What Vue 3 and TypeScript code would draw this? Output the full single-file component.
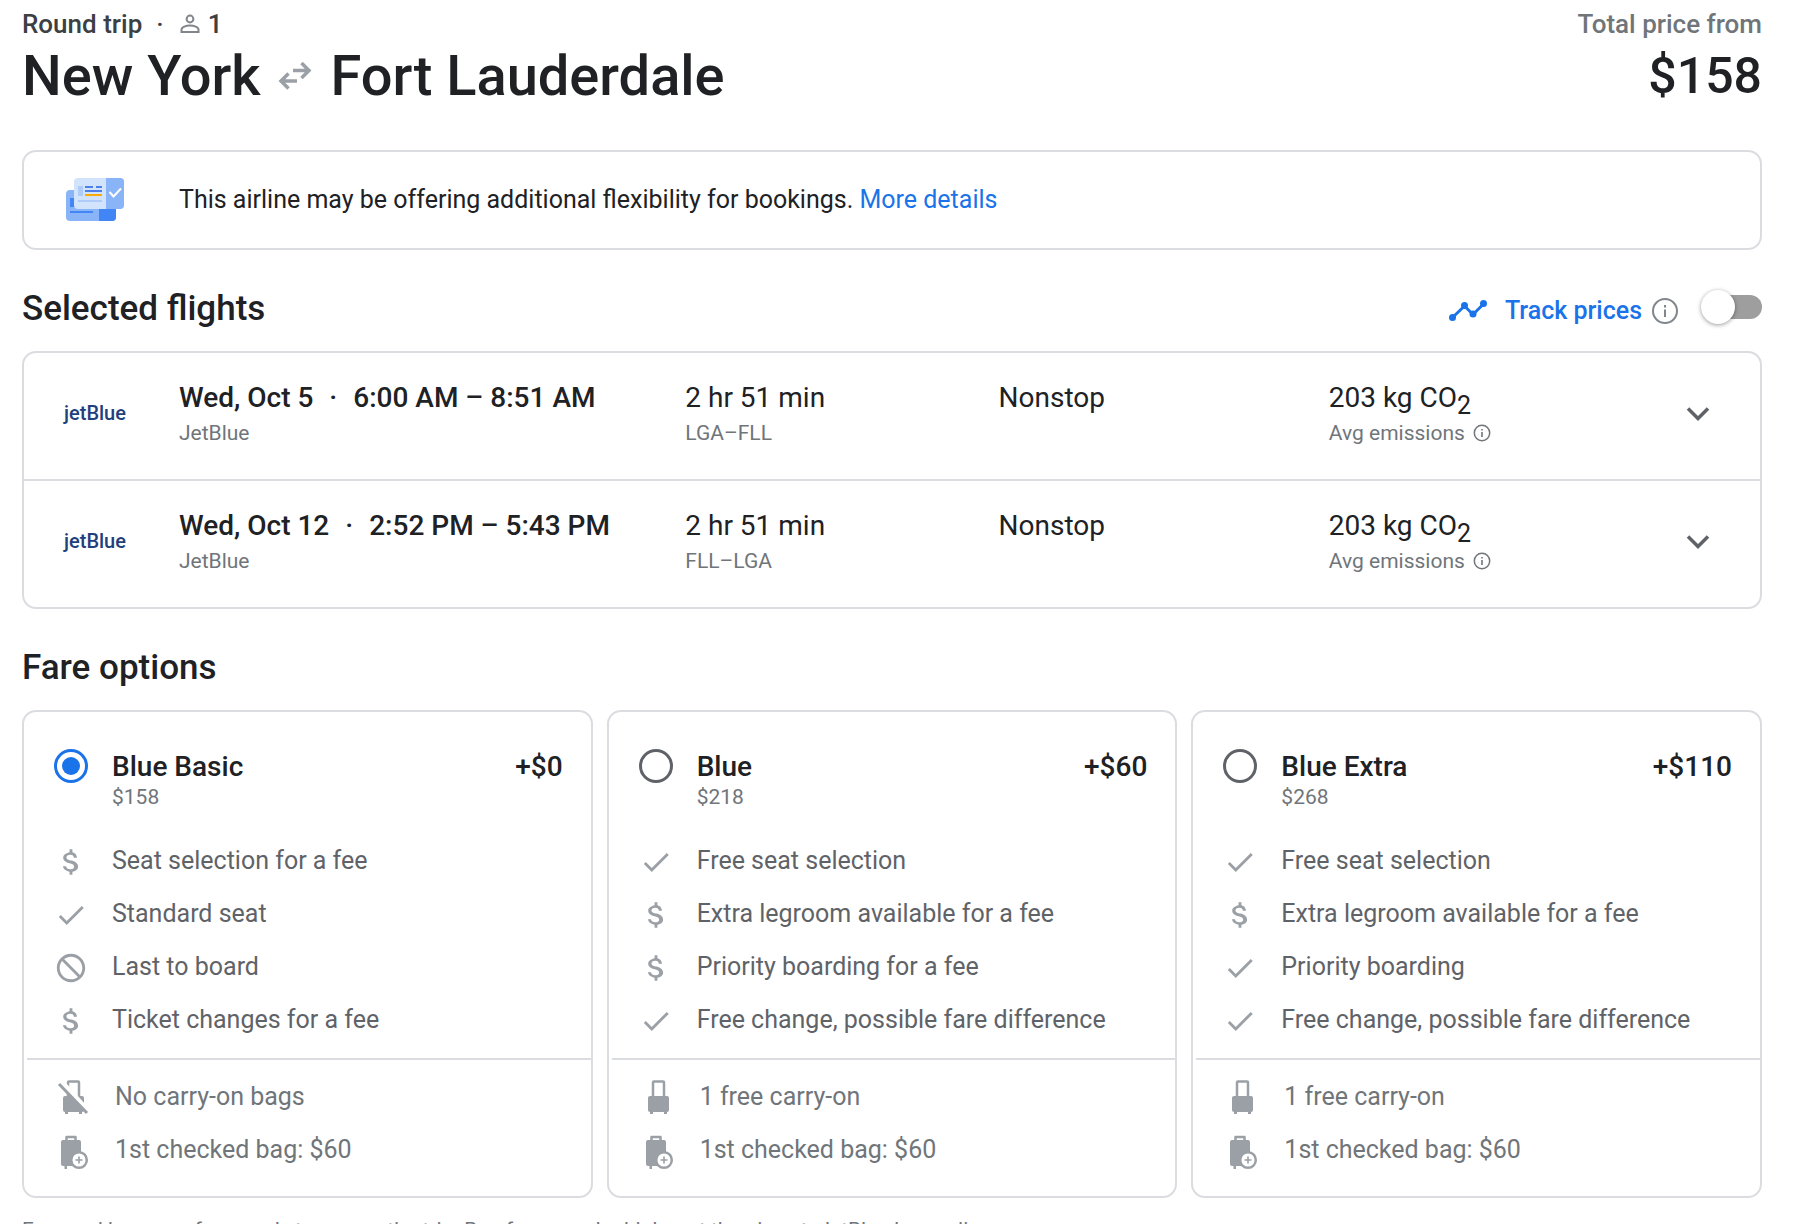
<script setup lang="ts">
import { ref } from 'vue'

type Mark = 'fee' | 'yes' | 'no'
type Bag = 'noCarry' | 'carry' | 'checked'

interface Flight {
  date: string
  times: string
  duration: string
  route: string
}

interface Fare {
  id: string
  name: string
  total: string
  extra: string
  perks: { mark: Mark; text: string }[]
  bags: { kind: Bag; text: string }[]
}

const flights: Flight[] = [
  { date: 'Wed, Oct 5', times: '6:00 AM – 8:51 AM', duration: '2 hr 51 min', route: 'LGA–FLL' },
  { date: 'Wed, Oct 12', times: '2:52 PM – 5:43 PM', duration: '2 hr 51 min', route: 'FLL–LGA' },
]

const fares: Fare[] = [
  {
    id: 'basic',
    name: 'Blue Basic',
    total: '$158',
    extra: '+$0',
    perks: [
      { mark: 'fee', text: 'Seat selection for a fee' },
      { mark: 'yes', text: 'Standard seat' },
      { mark: 'no', text: 'Last to board' },
      { mark: 'fee', text: 'Ticket changes for a fee' },
    ],
    bags: [
      { kind: 'noCarry', text: 'No carry-on bags' },
      { kind: 'checked', text: '1st checked bag: $60' },
    ],
  },
  {
    id: 'blue',
    name: 'Blue',
    total: '$218',
    extra: '+$60',
    perks: [
      { mark: 'yes', text: 'Free seat selection' },
      { mark: 'fee', text: 'Extra legroom available for a fee' },
      { mark: 'fee', text: 'Priority boarding for a fee' },
      { mark: 'yes', text: 'Free change, possible fare difference' },
    ],
    bags: [
      { kind: 'carry', text: '1 free carry-on' },
      { kind: 'checked', text: '1st checked bag: $60' },
    ],
  },
  {
    id: 'extra',
    name: 'Blue Extra',
    total: '$268',
    extra: '+$110',
    perks: [
      { mark: 'yes', text: 'Free seat selection' },
      { mark: 'fee', text: 'Extra legroom available for a fee' },
      { mark: 'yes', text: 'Priority boarding' },
      { mark: 'yes', text: 'Free change, possible fare difference' },
    ],
    bags: [
      { kind: 'carry', text: '1 free carry-on' },
      { kind: 'checked', text: '1st checked bag: $60' },
    ],
  },
]

const markPaths: Record<Mark, string> = {
  fee: 'M11.8 10.9c-2.27-.59-3-1.2-3-2.15 0-1.09 1.01-1.85 2.7-1.85 1.78 0 2.44.85 2.5 2.1h2.21c-.07-1.72-1.12-3.3-3.21-3.81V3h-2v2.16c-1.94.42-4.5 1.68-4.5 3.61 0 2.31 1.91 3.46 4.7 4.13 2.5.6 3 1.48 3 2.41 0 .69-.49 1.79-2.7 1.79-2.06 0-2.87-.92-2.98-2.1h-2.2c.12 2.19 2.76 3.42 4.68 3.83V21h2v-2.15c1.95-.37 4-1.5 4-3.55 0-2.84-2.43-3.81-4.7-4.4z',
  yes: 'M9 16.17 4.83 12l-1.42 1.41L9 19 21 7l-1.41-1.41z',
  no: 'M12 2C17.52 2 22 6.48 22 12s-4.48 10-10 10S2 17.52 2 12 6.48 2 12 2zM20 12c0-4.42-3.58-8-8-8-1.85 0-3.55.63-4.9 1.69L18.31 16.9C19.37 15.55 20 13.85 20 12zm-8 8c1.85 0 3.55-.63 4.9-1.69L5.69 7.1C4.63 8.45 4 10.15 4 12c0 4.42 3.58 8 8 8z',
}

const selectedFare = ref('basic')
const tracking = ref(false)
const openFlight = ref<number | null>(null)
</script>

<template>
  <main class="page">
    <header class="summary">
      <div>
        <p class="trip">
          <span>Round trip</span>
          <span class="dot">·</span>
          <svg class="person" viewBox="0 0 20 20" aria-label="Passengers">
            <circle cx="10" cy="5" r="3.4" fill="none" stroke="currentColor" stroke-width="2" />
            <path d="M1.5 18v-2.6c0-2.4 4.6-3.9 8.5-3.9s8.5 1.5 8.5 3.9V18z" fill="none" stroke="currentColor" stroke-width="2" />
          </svg>
          <span class="count">1</span>
        </p>
        <h1 class="cities">
          <span>New York</span>
          <svg class="swap" viewBox="0 0 34 28" aria-label="to and from">
            <path d="M15 8.5h16M23.5 1l7.5 7.5-7.5 7.5M19 19H3M10.5 11.5 3 19l7.5 7.5" fill="none" stroke="currentColor" stroke-width="3.5" />
          </svg>
          <span>Fort Lauderdale</span>
        </h1>
      </div>
      <div class="total">
        <p class="total-label">Total price from</p>
        <p class="total-price">$158</p>
      </div>
    </header>

    <section class="notice">
      <svg class="notice-icon" viewBox="0 0 58 44" aria-hidden="true">
        <rect y="12" width="50" height="31" rx="4" fill="#8ab4f8" />
        <path d="M33 12h13a4 4 0 0 1 4 4v23a4 4 0 0 1-4 4H33z" fill="#4285f4" />
        <path d="M4 20h5v9H4zM4 33h23v2H4z" fill="#4285f4" />
        <rect x="8" width="50" height="31" rx="4" fill="#d2e3fc" />
        <path d="M40 0h14a4 4 0 0 1 4 4v23a4 4 0 0 1-4 4H40z" fill="#8ab4f8" />
        <path d="M12 8h5v10h-5zM12 22h24v2H12z" fill="#aecbfa" />
        <path d="M19 8h8v2h-8zM30 8h6v2h-6zM19 12h17v2H19z" fill="#4c7fe8" />
        <path d="M19 16h17v2H19z" fill="#f9ab00" />
        <path d="m43.5 14 4 4.5 7.5-8" fill="none" stroke="#fff" stroke-width="2" />
      </svg>
      <p>
        This airline may be offering additional flexibility for bookings.
        <a href="#details">More details</a>
      </p>
    </section>

    <div class="section-head">
      <h2>Selected flights</h2>
      <div class="track">
        <svg class="trend" viewBox="0 0 38 22" aria-hidden="true">
          <path d="M3.5 17.5 15.5 6l8.5 8.5L34.5 4" fill="none" stroke="currentColor" stroke-width="3" />
          <g fill="currentColor">
            <circle cx="3.5" cy="17.5" r="3.5" />
            <circle cx="15.5" cy="5.5" r="3.5" />
            <circle cx="24" cy="14" r="3.5" />
            <circle cx="34.5" cy="3.5" r="3.5" />
          </g>
        </svg>
        <label for="track-prices">Track prices</label>
        <svg class="info-large" viewBox="0 0 26 26" aria-label="About price tracking">
          <circle cx="13" cy="13" r="12" fill="none" stroke="currentColor" stroke-width="2" />
          <path d="M12 11.5h2V19h-2zM12 7h2v2.5h-2z" fill="currentColor" />
        </svg>
        <input id="track-prices" v-model="tracking" class="switch" type="checkbox" role="switch" />
      </div>
    </div>

    <ul class="flights">
      <li v-for="(flight, i) in flights" :key="flight.route" class="flight">
        <span class="airline-logo">jetBlue</span>
        <div>
          <p class="lead strong">{{ flight.date }}<span class="dot">·</span>{{ flight.times }}</p>
          <p class="sub">JetBlue</p>
        </div>
        <div>
          <p class="lead">{{ flight.duration }}</p>
          <p class="sub">{{ flight.route }}</p>
        </div>
        <p class="lead">Nonstop</p>
        <div>
          <p class="lead">203 kg CO<sub>2</sub></p>
          <p class="sub emissions">
            Avg emissions
            <svg class="info-small" viewBox="0 0 18 18" aria-label="About emissions">
              <circle cx="9" cy="9" r="7.7" fill="none" stroke="currentColor" stroke-width="1.5" />
              <path d="M8.2 8h1.6v5H8.2zM8.2 5h1.6v1.6H8.2z" fill="currentColor" />
            </svg>
          </p>
        </div>
        <button
          class="expand"
          type="button"
          aria-label="Flight details"
          :aria-expanded="openFlight === i"
          @click="openFlight = openFlight === i ? null : i"
        >
          <svg viewBox="0 0 24 24" aria-hidden="true">
            <path d="m2 7.5 10 10 10-10" fill="none" stroke="currentColor" stroke-width="3.5" />
          </svg>
        </button>
      </li>
    </ul>

    <div class="section-head">
      <h2>Fare options</h2>
    </div>

    <div class="fares" role="radiogroup" aria-label="Fare options">
      <section v-for="fare in fares" :key="fare.id" class="fare">
        <div class="fare-head">
          <input :id="fare.id" v-model="selectedFare" class="radio" type="radio" name="fare" :value="fare.id" />
          <label :for="fare.id">
            <span class="fare-name">{{ fare.name }}</span>
            <span class="fare-total">{{ fare.total }}</span>
          </label>
          <span class="fare-extra">{{ fare.extra }}</span>
        </div>
        <ul class="perks">
          <li v-for="perk in fare.perks" :key="perk.text">
            <svg class="mark" viewBox="0 0 24 24" aria-hidden="true">
              <path :d="markPaths[perk.mark]" fill="currentColor" />
            </svg>
            {{ perk.text }}
          </li>
        </ul>
        <ul class="bags">
          <li v-for="bag in fare.bags" :key="bag.text">
            <svg v-if="bag.kind === 'checked'" class="bag" viewBox="0 -2 34 38" aria-hidden="true">
              <path d="M9.5 7V3h9v4" fill="none" stroke="currentColor" stroke-width="2.5" stroke-linejoin="round" />
              <path d="M6 6h16a2 2 0 0 1 2 2v24H10v3H7.5v-3H6a2 2 0 0 1-2-2V8a2 2 0 0 1 2-2z" fill="currentColor" />
              <circle cx="22" cy="26" r="7.8" fill="#fff" stroke="currentColor" stroke-width="2.5" />
              <path d="M21.2 22.5h1.6v2.7h2.7v1.6h-2.7v2.7h-1.6v-2.7h-2.7v-1.6h2.7z" fill="currentColor" />
            </svg>
            <svg v-else class="bag" viewBox="1 0 34 38" aria-hidden="true">
              <path d="M12 18V3.5a1 1 0 0 1 1-1h9a1 1 0 0 1 1 1V18" fill="none" stroke="currentColor" stroke-width="2.5" />
              <path d="M9 17h17a2 2 0 0 1 2 2v12a2 2 0 0 1-2 2v2h-3v-2H12v2H9v-2a2 2 0 0 1-2-2V19a2 2 0 0 1 2-2z" fill="currentColor" />
              <template v-if="bag.kind === 'noCarry'">
                <path d="m4 1 28 31" stroke="#fff" stroke-width="5" />
                <path d="m3 5 28 29" stroke="currentColor" stroke-width="3" />
              </template>
            </svg>
            {{ bag.text }}
          </li>
        </ul>
      </section>
    </div>

    <p class="footnote">
      Fare and baggage fees apply to your entire trip. Bag fees may be higher at the airport.
      <a href="#bags">JetBlue bag policy</a>
    </p>
  </main>
</template>

<style>
body {
  margin: 0;
  background: #fff;
}
</style>

<style scoped>
.page {
  padding: 8px 40px 24px 22px;
  font-family: Roboto, "Liberation Sans", sans-serif;
  font-size: 25px;
  line-height: 32px;
  color: #202124;
}

p,
h1,
h2,
ul {
  margin: 0;
  padding: 0;
  list-style: none;
}

a {
  color: #1a73e8;
  text-decoration: none;
}

.dot {
  margin: 0 14px;
}

.summary {
  display: flex;
  justify-content: space-between;
  font-size: 26px;
  font-weight: 500;
}

.trip {
  display: flex;
  align-items: center;
  color: #3c4043;
}

.person {
  width: 20px;
  height: 20px;
  margin: 0 8px 0 2px;
  color: #80868b;
}

.cities {
  display: flex;
  align-items: center;
  gap: 18px;
  font-size: 56px;
  line-height: 72px;
  font-weight: 500;
}

.swap {
  width: 34px;
  height: 28px;
  color: #9aa0a6;
}

.total {
  text-align: right;
}

.total-label {
  color: #70757a;
}

.total-price {
  font-size: 50px;
  line-height: 72px;
}

.notice {
  display: flex;
  align-items: center;
  gap: 55px;
  margin-top: 38px;
  padding: 32px 42px;
  border: 2px solid #dadce0;
  border-radius: 14px;
}

.notice-icon {
  flex: none;
  width: 58px;
  height: 44px;
  margin: -6px 0;
}

.section-head {
  display: flex;
  align-items: center;
  justify-content: space-between;
  height: 40px;
  margin: 39px 0 22px;
}

h2 {
  font-size: 35px;
  line-height: 40px;
  font-weight: 500;
}

.track {
  display: flex;
  align-items: center;
  margin-top: 4px;
  font-weight: 500;
  color: #1a73e8;
}

.trend {
  width: 38px;
  height: 22px;
  margin-right: 18px;
}

.info-large {
  width: 26px;
  height: 26px;
  margin: 0 30px 0 10px;
  color: #80868b;
}

.switch {
  appearance: none;
  display: flex;
  align-items: center;
  width: 54px;
  height: 24px;
  margin: 0 0 8px;
  background: #9e9e9e;
  border-radius: 12px;
}

.switch::before {
  content: "";
  flex: none;
  width: 34px;
  height: 34px;
  margin-left: -7px;
  border-radius: 50%;
  background: #fff;
  box-shadow: 0 1px 4px rgba(0, 0, 0, 0.4);
}

.switch:checked {
  background: #8ab4f8;
}

.switch:checked::before {
  margin-left: 26px;
  background: #1a73e8;
}

.flights {
  border: 2px solid #dadce0;
  border-radius: 14px;
}

.flight {
  display: grid;
  grid-template-columns: 115px 506fr 313fr 330fr 347fr 44px;
  align-items: start;
  padding: 25px 40px 31px;
}

.flight + .flight {
  border-top: 2px solid #dadce0;
}

.airline-logo {
  align-self: center;
  font-size: 20px;
  font-weight: 500;
  color: #1f3f7c;
}

.lead {
  font-size: 28px;
  line-height: 40px;
}

.strong {
  font-weight: 500;
}

.strong .dot {
  margin: 0 16px;
}

.sub {
  font-size: 21px;
  line-height: 30px;
  color: #70757a;
}

sub {
  font-size: 25px;
  line-height: 0;
}

.emissions {
  display: flex;
  align-items: center;
  gap: 8px;
}

.info-small {
  width: 18px;
  height: 18px;
}

.expand {
  align-self: center;
  display: flex;
  justify-content: center;
  padding: 0;
  border: 0;
  background: none;
  color: #5f6368;
}

.expand svg {
  width: 24px;
  height: 24px;
}

.fares {
  display: grid;
  grid-template-columns: repeat(3, 1fr);
  gap: 14px;
}

.fare {
  border: 2px solid #dadce0;
  border-radius: 14px;
}

.fare-head {
  display: flex;
  align-items: flex-start;
  padding: 37px 28px 24px 30px;
}

.radio {
  appearance: none;
  display: grid;
  place-items: center;
  width: 34px;
  height: 34px;
  margin: 0 24px 0 0;
  border: 3px solid #5f6368;
  border-radius: 50%;
}

.radio:checked {
  border-color: #1a73e8;
}

.radio:checked::before {
  content: "";
  width: 18px;
  height: 18px;
  border-radius: 50%;
  background: #1a73e8;
}

.fare-name,
.fare-extra {
  font-size: 28px;
  line-height: 36px;
  font-weight: 500;
}

.fare-name,
.fare-total {
  display: block;
}

.fare-total {
  font-size: 21px;
  line-height: 25px;
  color: #70757a;
}

.fare-extra {
  margin-left: auto;
}

.perks {
  padding: 0 28px 12px 30px;
  color: #5f6368;
}

.perks li,
.bags li {
  display: flex;
  align-items: center;
  height: 53px;
}

.mark {
  width: 34px;
  height: 34px;
  margin: 3px 24px 0 0;
  color: #9aa0a6;
}

.bags {
  margin-left: 3px;
  padding: 10px 24px 20px 30px;
  border-top: 2px solid #dadce0;
  color: #70757a;
}

.bag {
  width: 34px;
  height: 38px;
  margin: 3px 24px 0 0;
  color: #9aa0a6;
}

.footnote {
  margin-top: 16px;
  font-size: 21px;
  line-height: 32px;
  color: #70757a;
}

.footnote a {
  color: inherit;
}
</style>
